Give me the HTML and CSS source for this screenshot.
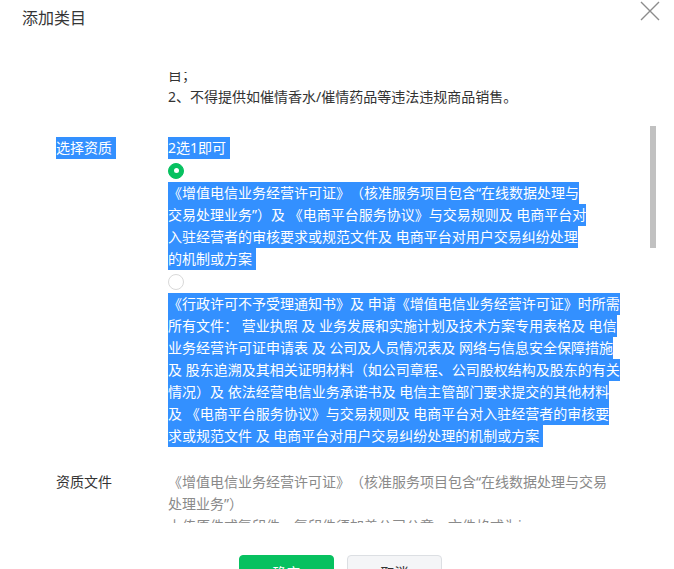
FILE: index.html
```html
<!DOCTYPE html>
<html lang="zh-CN">
<head>
<meta charset="utf-8">
<title>添加类目</title>
<link rel="stylesheet" href="styles.css">
</head>
<body>
<div class="dialog">
  <header class="dialog-header">
    <h2 class="dialog-title">添加类目</h2>
    <button class="dialog-close" aria-label="关闭">
      <svg width="20" height="20" viewBox="0 0 20 20"><path d="M1 1 L19 19 M19 1 L1 19" stroke="#8c8c8c" stroke-width="1.4" fill="none"/></svg>
    </button>
  </header>

  <div class="dialog-body">
    <div class="form">
      <div class="row row-first">
        <div class="label">类目说明</div>
        <div class="value">
          <span class="ln">1、仅可在本类目下发布与所申请类目相符的商品或服务，不得超出类</span>
          <span class="ln">目；</span>
          <span class="ln">2、不得提供如催情香水/催情药品等违法违规商品销售。</span>
        </div>
      </div>

      <div class="row">
        <div class="label"><span class="sel sel-end">选择资质</span></div>
        <div class="value">
          <span class="ln sel sel-end">2选1即可</span>
          <div class="radio-line"><span class="radio radio-on"></span></div>
          <div class="option">
            <span class="ln sel">《增值电信业务经营许可证》（核准服务项目包含“在线数据处理与</span>
            <span class="ln sel">交易处理业务”）及 《电商平台服务协议》与交易规则及 电商平台对</span>
            <span class="ln sel">入驻经营者的审核要求或规范文件及 电商平台对用户交易纠纷处理</span>
            <span class="ln sel sel-end">的机制或方案</span>
          </div>
          <div class="radio-line"><span class="radio"></span></div>
          <div class="option">
            <span class="ln sel">《行政许可不予受理通知书》及 申请《增值电信业务经营许可证》时所需</span>
            <span class="ln sel">所有文件： 营业执照 及 业务发展和实施计划及技术方案专用表格及 电信</span>
            <span class="ln sel">业务经营许可证申请表 及 公司及人员情况表及 网络与信息安全保障措施</span>
            <span class="ln sel">及 股东追溯及其相关证明材料（如公司章程、公司股权结构及股东的有关</span>
            <span class="ln sel">情况）及 依法经营电信业务承诺书及 电信主管部门要求提交的其他材料</span>
            <span class="ln sel">及 《电商平台服务协议》与交易规则及 电商平台对入驻经营者的审核要</span>
            <span class="ln sel sel-end">求或规范文件 及 电商平台对用户交易纠纷处理的机制或方案</span>
          </div>
        </div>
      </div>

      <div class="row">
        <div class="label">资质文件</div>
        <div class="value muted">
          <span class="ln">《增值电信业务经营许可证》（核准服务项目包含“在线数据处理与交易</span>
          <span class="ln">处理业务”）</span>
          <span class="ln">上传原件或复印件，复印件须加盖公司公章，文件格式为jpg、png</span>
          <span class="ln">大小不超过5M</span>
        </div>
      </div>
    </div>
    <div class="scroll-thumb"></div>
  </div>

  <footer class="dialog-footer">
    <button class="btn btn-primary">确定</button>
    <button class="btn btn-default">取消</button>
  </footer>
</div>
</body>
</html>
```

FILE: styles.css
```css
* { box-sizing: border-box; }

html, body {
  margin: 0;
  padding: 0;
  background: #fff;
}

body {
  font-family: "Noto Sans", "Noto Sans CJK SC", sans-serif;
  font-size: 14px;
  color: #333;
  overflow: hidden;
  text-spacing-trim: space-all;
}

.dialog {
  position: relative;
  width: 674px;
  height: 569px;
  background: #fff;
}

.dialog-header {
  height: 72px;
  padding: 6px 22px 0;
}

.dialog-title {
  margin: 0;
  font-size: 16px;
  font-weight: normal;
  line-height: 24px;
  color: #353535;
}

.dialog-close {
  position: absolute;
  top: 1px;
  left: 640px;
  width: 20px;
  height: 20px;
  padding: 0;
  border: 0;
  background: none;
}

.dialog-close svg { display: block; }

.dialog-body {
  position: relative;
  height: 451px;
  overflow: hidden;
}

.form {
  padding-left: 56px;
}

.row {
  display: flex;
  margin-bottom: 24px;
}

.row-first {
  margin-top: -30px;
  margin-bottom: 29px;
}

.label {
  width: 112px;
  flex: none;
  line-height: 22px;
  color: #333;
}

.value {
  flex: none;
  width: 470px;
  line-height: 22px;
}

.ln {
  display: block;
  width: fit-content;
  white-space: nowrap;
  line-height: 22px;
}

.sel {
  background: #3390ff;
  color: #fff;
}

.label .sel {
  display: inline-block;
  line-height: 22px;
}

.sel-end { padding-right: 4px; }

.radio-line {
  height: 23px;
  display: flex;
  align-items: center;
}

.radio {
  display: block;
  width: 16px;
  height: 16px;
  border-radius: 50%;
  border: 1px solid #d9d9d9;
  background: #fff;
}

.radio-on {
  position: relative;
  border-color: #07c160;
  background: #07c160;
}

.radio-on::after {
  content: "";
  position: absolute;
  left: 50%;
  top: 50%;
  width: 5px;
  height: 5px;
  margin: -2.5px 0 0 -2.5px;
  border-radius: 50%;
  background: #fff;
}

.muted { color: #8a8a8a; }

.scroll-thumb {
  position: absolute;
  top: 54px;
  left: 650px;
  width: 6px;
  height: 122px;
  background: #c1c1c1;
}

.dialog-footer {
  display: flex;
  justify-content: center;
  gap: 13px;
  padding: 32px 0 0 7px;
}

.btn {
  width: 95px;
  height: 36px;
  border-radius: 4px;
  font-family: "Noto Sans", "Noto Sans CJK SC", sans-serif;
  font-size: 14px;
  line-height: 34px;
  padding: 0;
}

.btn-primary {
  border: 1px solid #07c160;
  background: #07c160;
  color: #fff;
}

.btn-default {
  border: 1px solid #dcdfe3;
  background: #f4f5f7;
  color: #333;
}
```
